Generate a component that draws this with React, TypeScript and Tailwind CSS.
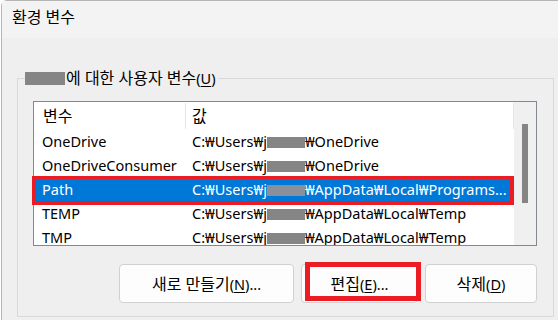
import React from "react";

const FONT = { fontFamily: '"Noto Sans", "Noto Sans CJK KR", sans-serif' };

function K({ children }: { children: React.ReactNode }) {
  return <span className="text-[16px]">{children}</span>;
}

function Redact({ w = 38, sel = false }: { w?: number; sel?: boolean }) {
  return (
    <span
      className={`inline-block h-[11px] align-middle ${sel ? "bg-[#8a9099]" : "bg-[#858585]"}`}
      style={{ width: w }}
    />
  );
}

const rows = [
  { name: "OneDrive", tail: "₩OneDrive" },
  { name: "OneDriveConsumer", tail: "₩OneDrive" },
  { name: "Path", tail: "₩AppData₩Local₩Programs...", sel: true },
  { name: "TEMP", tail: "₩AppData₩Local₩Temp" },
  { name: "TMP", tail: "₩AppData₩Local₩Temp" },
];

export default function App() {
  return (
    <div className="relative w-[558px] h-[320px] overflow-hidden bg-white text-[14.5px] text-black" style={FONT}>
      <div className="ml-px w-[557px] h-[320px] border-l border-t border-[#b4b4b4] rounded-tl-[6px] bg-[#efefef] flex flex-col">
        {/* Title bar */}
        <div className="h-[37px] shrink-0 bg-[#f3f3f3] pl-[10px] pt-[5px] text-[16px] leading-[22px]">환경 변수</div>

        {/* Group box */}
        <div className="mt-[40px] ml-[15px] w-[537px] h-[239px] border border-[#d9d9d9] relative pl-[15px] pr-[16px] pt-[22px]">
          <div className="absolute left-[7px] top-[-11px] flex items-center bg-[#efefef] pr-[2px] leading-[20px]">
            <span className="inline-block w-[40px] h-[13px] bg-[#858585]" />
            <span className="ml-px">
              <K>에 대한 사용자 변수</K>(<span className="underline underline-offset-2">U</span>)
            </span>
          </div>

          {/* List box */}
          <div className="w-[504px] h-[145px] border border-[#828790] bg-white flex overflow-hidden">
            <div className="w-[480px] flex flex-col">
              {/* Header */}
              <div className="h-[28px] shrink-0 flex items-stretch">
                <div className="w-[151px] pl-[9px] flex items-center"><K>변수</K></div>
                <div className="w-px bg-[#e5e5e5] my-[1px]" />
                <div className="flex-1 pl-[6px] flex items-center"><K>값</K></div>
                <div className="w-px bg-[#e5e5e5] my-[1px]" />
              </div>
              {rows.map((r) => (
                <div
                  key={r.name}
                  className={`h-[24px] shrink-0 flex items-center whitespace-nowrap ${
                    r.sel ? "bg-[#0078d7] text-white" : ""
                  }`}
                >
                  <div className="w-[152px] pl-[8px]">{r.name}</div>
                  <div className="flex-1 pl-[6px] flex items-center">
                    <span>C:₩Users₩j</span>
                    <Redact sel={r.sel} />
                    <span>{r.tail}</span>
                  </div>
                </div>
              ))}
            </div>
            {/* Scrollbar */}
            <div className="flex-1 bg-[#f0f0f0] pl-[8px] pt-[22px]">
              <div className="w-[6px] h-[79px] bg-[#858585]" />
            </div>
          </div>

          {/* Buttons */}
          <div className="mt-[18px] flex justify-end gap-[7px]">
            <button className="w-[175px] h-[39px] bg-[#fdfdfd] border border-[#d0d0d0] rounded-[4px]">
              <K>새로 만들기</K>(<span className="underline underline-offset-2">N</span>)...
            </button>
            <button className="w-[117px] h-[39px] bg-[#fdfdfd] border border-[#d0d0d0] rounded-[4px]">
              <K>편집</K>(<span className="underline underline-offset-2">E</span>)...
            </button>
            <button className="w-[112px] h-[39px] bg-[#fdfdfd] border border-[#d0d0d0] rounded-[4px]">
              <K>삭제</K>(<span className="underline underline-offset-2">D</span>)
            </button>
          </div>
        </div>
      </div>

      {/* Red annotation boxes */}
      <div className="absolute left-[32px] top-[176px] w-[482px] h-[29px] border-[4px] border-t-[3px] border-[#ec1c24]" />
      <div className="absolute left-[305px] top-[262px] w-[116px] h-[39px] border-[5px] border-[#ec1c24]" />
    </div>
  );
}
